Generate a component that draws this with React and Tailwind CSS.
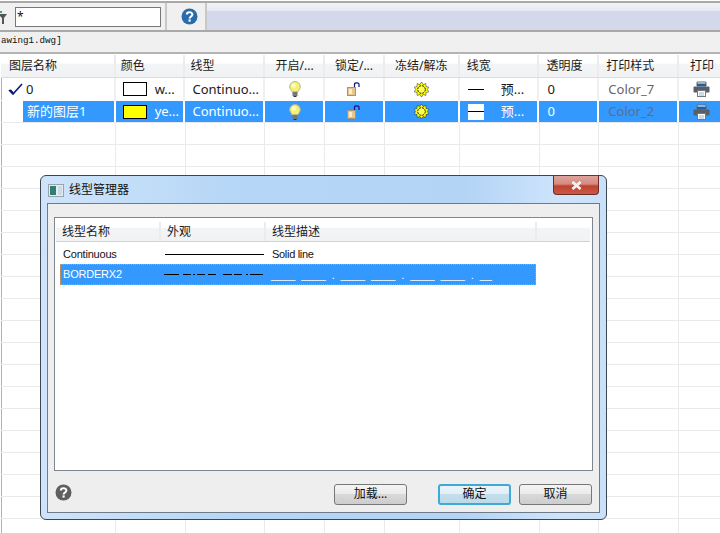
const font = { fontFamily: '"Noto Sans", "Noto Sans CJK SC", sans-serif' };

function Funnel() {
  return (
    <svg width="10" height="14" viewBox="0 0 10 14" className="shrink-0">
      <path d="M0 3h9L6 7v6H4V7z" fill="#555" />
      <path d="M1 1h3" stroke="#3aa57a" strokeWidth="2" />
    </svg>
  );
}
function Help({ color, size = 17 }) {
  return (
    <svg width={size} height={size} viewBox="0 0 17 17" className="shrink-0">
      <circle cx="8.5" cy="8.5" r="8" fill={color} />
      <path d="M5.8 6.6c0-3.2 5.6-3.2 5.6 0 0 2-2.8 2-2.8 3.8" fill="none" stroke="#fff" strokeWidth="2" />
      <rect x="7.5" y="11.4" width="2.2" height="2.2" fill="#fff" />
    </svg>
  );
}
function Check() {
  return (
    <svg width="15" height="13" viewBox="0 0 15 13" className="shrink-0">
      <path d="M1 7l4 4L14 1" fill="none" stroke="#0a1a80" strokeWidth="1.6" />
      <path d="M2 7l3 3" stroke="#0a1a80" strokeWidth="2" />
    </svg>
  );
}
function Bulb() {
  return (
    <svg width="12" height="16" viewBox="0 0 12 16">
      <path d="M6 .5a5.3 5.3 0 0 1 5.3 5.3c0 2-1.6 3-2.3 5H3c-.7-2-2.3-3-2.3-5A5.3 5.3 0 0 1 6 .5z" fill="#f4f26e" stroke="#b5b48c" />
      <circle cx="4.8" cy="4.6" r="2.3" fill="#fbfbc4" />
      <rect x="3.5" y="11" width="5" height="4" fill="#777" />
      <rect x="4.5" y="15" width="3" height="1" fill="#333" />
    </svg>
  );
}
function Lock() {
  return (
    <svg width="14" height="14" viewBox="0 0 14 14">
      <path d="M7.5 5V2c0-1.5 4.5-1.5 4.5 0v3" fill="none" stroke="#12127a" strokeWidth="1.2" />
      <rect x="0.5" y="5.5" width="8" height="8" fill="#e7c68d" stroke="#a9946f" />
      <rect x="2" y="7" width="3" height="5" fill="#fbeccc" />
    </svg>
  );
}
function Sun() {
  return (
    <svg width="15" height="15" viewBox="0 0 15 15">
      <path d="M7.5 0l1.6 2.6 2.7-1.1.2 3 2.9.7-1.6 2.3 1.6 2.3-2.9.7-.2 3-2.7-1.1-1.6 2.6-1.6-2.6-2.7 1.1-.2-3-2.9-.7 1.6-2.3L.1 5.2l2.9-.7.2-3 2.7 1.1z" fill="#ffff00" stroke="#222" strokeWidth=".5" />
      <circle cx="7.5" cy="7.5" r="3.8" fill="#ffff50" stroke="#111" strokeWidth="1" strokeDasharray="2 1" />
    </svg>
  );
}
function Printer() {
  return (
    <svg width="17" height="16" viewBox="0 0 17 16">
      <path d="M4 5V1h9v4" fill="#fff" stroke="#666" />
      <rect x="4" y="2.5" width="9" height="3" fill="#1b62ad" />
      <rect x="0.5" y="5.5" width="16" height="6" rx="1" fill="#5a5f66" />
      <rect x="4.5" y="9.5" width="8" height="6" fill="#fff" stroke="#777" />
      <path d="M6 12h5M6 14h5" stroke="#9db4cd" />
    </svg>
  );
}

const cols = [
  { w: 'w-[115px]', h: '图层名称', hc: 'pl-[8px]' },
  { w: 'w-[70px]', h: '颜色', hc: 'pl-[5px]' },
  { w: 'w-[80px]', h: '线型', hc: 'pl-[5px]' },
  { w: 'w-[60px]', h: '开启/...', hc: 'justify-center pl-[1px]' },
  { w: 'w-[60px]', h: '锁定/...', hc: 'justify-center' },
  { w: 'w-[75px]', h: '冻结/解冻', hc: 'justify-center' },
  { w: 'w-[80px]', h: '线宽', hc: 'pl-[7px]' },
  { w: 'w-[60px]', h: '透明度', hc: 'pl-[7px]' },
  { w: 'w-[80px]', h: '打印样式', hc: 'pl-[7px]' },
  { w: 'w-[41px]', h: '打印', hc: 'pl-[11px]' },
];

function NameCell({ sel }) {
  return sel ? (
    <div className="flex h-full w-full pl-[22px]">
      <div className="flex h-full flex-1 items-center bg-[#3399ff] pl-[4px] text-white">新的图层1</div>
    </div>
  ) : (
    <div className="flex h-full w-full items-center pl-[7px]">
      <Check />
      <span className="ml-[3px]">0</span>
    </div>
  );
}

function Row({ sel }) {
  const bg = sel ? 'bg-[#3399ff]' : '';
  const fg = sel ? 'text-white' : 'text-[#1a1a1a]';
  const line = sel ? 'border-r-2 border-white' : 'border-r-2 border-[#f0f0f0]';
  const cell = 'flex h-full items-center';
  return (
    <div className={`flex h-[22px] text-[13px] leading-none ${sel ? 'border-t border-white' : ''}`}>
      <div className={`${cols[0].w} h-full ${line} ${fg}`}><NameCell sel={sel} /></div>
      <div className={`${cols[1].w} ${cell} ${line} ${bg} ${fg} pl-[7px]`}>
        <div className={`h-[14px] w-[24px] border border-black ${sel ? 'bg-[#ffff00]' : 'bg-white'}`} />
        <span className="ml-[8px]">{sel ? 'ye...' : 'w...'}</span>
      </div>
      <div className={`${cols[2].w} ${cell} ${line} ${bg} ${fg} pl-[7px]`}>Continuo...</div>
      <div className={`${cols[3].w} ${cell} ${line} ${bg} justify-center pl-[2px]`}><Bulb /></div>
      <div className={`${cols[4].w} ${cell} ${line} ${bg} justify-center`}><Lock /></div>
      <div className={`${cols[5].w} ${cell} ${line} ${bg} justify-center`}><Sun /></div>
      <div className={`${cols[6].w} ${cell} ${line} ${bg} ${fg} pl-[8px]`}>
        <div className={`flex h-[16px] w-[16px] items-center ${sel ? 'bg-white' : ''}`}>
          <div className="h-px w-full bg-black" />
        </div>
        <span className="ml-[17px]">预...</span>
      </div>
      <div className={`${cols[7].w} ${cell} ${line} ${bg} ${fg} pl-[8px]`}>0</div>
      <div className={`${cols[8].w} ${cell} ${line} ${bg} pl-[9px] ${sel ? 'text-[#5c6f88]' : 'text-[#666]'}`}>{sel ? 'Color_2' : 'Color_7'}</div>
      <div className={`${cols[9].w} ${cell} ${bg} pl-[14px]`}><Printer /></div>
    </div>
  );
}

function EmptyRow() {
  return (
    <div className="flex h-[22px] border-t border-[#eaeaea]">
      {cols.map((c, i) => (
        <div key={i} className={`${c.w} h-full ${i < 9 ? 'border-r border-[#eaeaea]' : ''}`} />
      ))}
    </div>
  );
}

function Btn({ children, primary }) {
  return (
    <div
      className={`flex h-[21px] w-[73px] items-center justify-center rounded-[3px] text-[12px] text-[#111] ${
        primary
          ? 'border-2 border-[#3fa9d8] bg-[linear-gradient(#eaf4f9_0%,#e2eff6_45%,#c3deec_50%,#bcdaea_100%)]'
          : 'border border-[#777] bg-[linear-gradient(#f4f4f4_0%,#ebebeb_45%,#d9d9d9_50%,#cdcdcd_100%)]'
      }`}
    >
      {children}
    </div>
  );
}

function Dialog() {
  return (
    <div className="absolute left-[40px] top-[175px] flex h-[345px] w-[567px] flex-col rounded-[6px] border border-[#3c4650] bg-[linear-gradient(90deg,#cfe4fa_0%,#b5d6f6_35%,#b3d4f5_75%,#cfe4fc_92%,#c8e0f8_100%)] px-[6px] pb-[6px]">
      <div className="flex h-[27px] shrink-0 items-center pl-[1px] pt-[1px]">
        <svg width="16" height="13" viewBox="0 0 16 13" className="shrink-0">
          <rect x=".5" y=".5" width="15" height="12" fill="#e8ecef" stroke="#9aa3ab" />
          <rect x="2" y="2" width="6" height="9" fill="#2f7f78" />
          <rect x="10" y="2" width="4" height="9" fill="#c9dde8" />
        </svg>
        <span className="ml-[5px] text-[12px] text-[#111]">线型管理器</span>
        <div className="absolute right-[7px] top-0 flex h-[19px] w-[46px] items-center justify-center rounded-b-[4px] border border-t-0 border-[#6b2d28] bg-[linear-gradient(#dfa39c_0%,#d58a80_45%,#c0412d_55%,#c9584a_100%)]">
          <svg width="11" height="9" viewBox="0 0 11 9">
            <path d="M1.5 1l8 7M9.5 1l-8 7" stroke="#fff" strokeWidth="2.6" />
            <path d="M1.5 1l8 7M9.5 1l-8 7" stroke="#eee" strokeWidth="1.6" />
          </svg>
        </div>
      </div>
      <div className="flex flex-1 flex-col border border-[#6f7b88] bg-[#eeeeee] px-[6px] pt-[13px]">
        <div className="flex h-[254px] flex-col border border-[#7c8791] bg-white pl-[1px] pr-[2px]">
          <div className="flex h-[24px] shrink-0 border-b border-[#d2d2d2] bg-[linear-gradient(#ffffff_0%,#ffffff_40%,#f3f4f6_45%,#f1f2f4_100%)] pt-[4px] text-[12px] text-[#1a1a1a]">
            <div className="flex w-[105px] items-center border-r-2 border-[#ececec] pl-[6px]">线型名称</div>
            <div className="flex w-[105px] items-center border-r-2 border-[#ececec] pl-[6px]">外观</div>
            <div className="flex w-[271px] items-center border-r-2 border-[#ececec] pl-[6px]">线型描述</div>
            <div className="flex-1" />
          </div>
          <div className="flex h-[22px] items-center pl-[7px] pt-[2px] text-[11px] tracking-[-0.2px] text-[#111]" style={{ fontFamily: '"Liberation Sans", sans-serif' }}>
            <span className="w-[102px]">Continuous</span>
            <div className="h-px w-[99px] bg-black" />
            <span className="ml-[8px] tracking-[-0.3px]">Solid line</span>
          </div>
          <div className="ml-[4px] flex h-[21px] w-[476px] items-center border border-dotted border-[#c9a06a] bg-[#3399ff] pl-[2px] text-[11px] text-white" style={{ fontFamily: '"Liberation Sans", sans-serif' }}>
            <span className="w-[101px] tracking-[-0.2px]">BORDERX2</span>
            <svg width="99" height="3" viewBox="0 0 99 3" className="shrink-0">
              <path d="M0 1.5h15M19 1.5h8M29 1.5h2M33 1.5h8M44 1.5h8M59 1.5h9M70 1.5h8M82 1.5h2M86 1.5h13" stroke="#000" strokeWidth="1" />
            </svg>
            <span className="ml-[8px] whitespace-pre pt-[2px] [word-spacing:2.8px]">____ ____ . ____ ____ . ____ ____ . __</span>
          </div>
        </div>
        <div className="flex flex-1 items-center pl-[1px] pt-[5px]">
          <div className="-mt-[4px]"><Help color="#5f5f5f" /></div>
          <div className="ml-[262px]"><Btn>加载...</Btn></div>
          <div className="ml-[31px]"><Btn primary>确定</Btn></div>
          <div className="ml-[8px]"><Btn>取消</Btn></div>
        </div>
      </div>
    </div>
  );
}

export default function App() {
  return (
    <div className="relative h-[533px] w-[720px] overflow-hidden bg-white" style={font}>
      <div className="mt-px flex h-[31px] border-y-2 border-[#a9a9a9] bg-[#f0f0f0]">
        <div className="flex w-[167px] items-center border-r-2 border-[#c8c8c8]">
          <div className="-ml-[2px] pt-[2px]"><Funnel /></div>
          <div className="ml-[7px] flex h-[20px] w-[146px] items-start border border-[#777] bg-white pl-[1px] text-[12px] leading-[18px] text-[#111]">*</div>
        </div>
        <div className="flex w-[40px] items-center justify-center border-r-2 border-[#c8c8c8] pl-[7px]">
          <Help color="#2a6cab" />
        </div>
        <div className="flex-1 bg-[linear-gradient(#f3f4f9_0%,#e6e9f3_28%,#d3d9ea_30%,#d3d9ea_100%)]" />
      </div>
      <div className="h-[22px] border-b-2 border-[#b4b4b4] bg-[#f0f0f0] pl-px pt-[2px] text-[9.2px] leading-[14px] text-[#111]" style={{ fontFamily: '"Liberation Mono", monospace' }}>
        awing1.dwg]
      </div>
      <div className="ml-px border-l border-[#aab2bf]">
        <div className="-ml-[1px] flex h-[24px] border-b border-[#dcdcdc] bg-[linear-gradient(#ffffff_0%,#ffffff_40%,#f3f4f6_45%,#f1f2f4_100%)] pt-[1px] text-[12px] text-[#1a1a1a]">
          {cols.map((c, i) => (
            <div key={i} className={`${c.w} flex h-full items-center ${i < 9 ? 'border-r-2 border-[#ececec]' : ''} ${c.hc}`}>{c.h}</div>
          ))}
        </div>
        <div className="-ml-[1px]">
          <Row />
          <Row sel />
          {Array.from({ length: 19 }, (_, i) => <EmptyRow key={i} />)}
        </div>
      </div>
      <Dialog />
    </div>
  );
}
